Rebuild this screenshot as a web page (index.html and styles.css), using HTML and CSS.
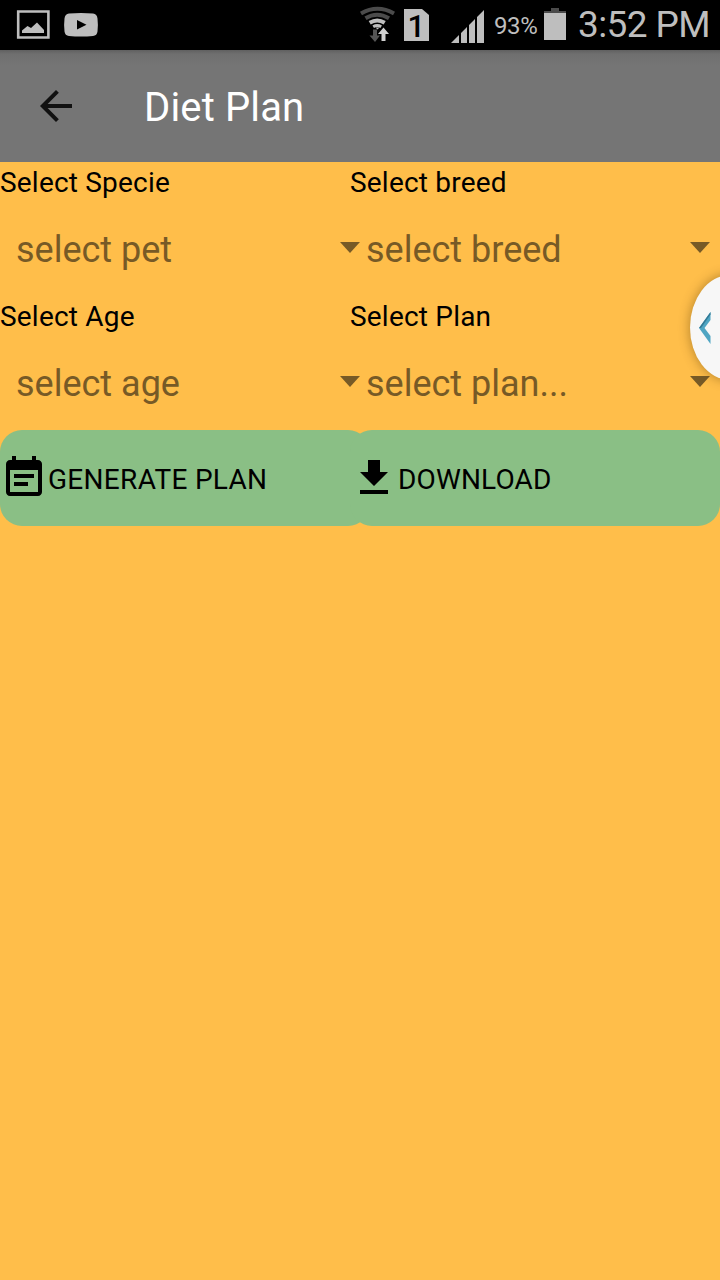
FILE: index.html
```html
<!DOCTYPE html>
<html lang="en">
<head>
<meta charset="utf-8">
<title>Diet Plan</title>
<link rel="stylesheet" href="styles.css">
</head>
<body>
<div class="screen">
  <header class="status">
    <svg class="notices" width="120" height="50" viewBox="0 0 120 50">
      <path fill="none" stroke="#bebebe" stroke-width="2.6" d="M18.200 11.500h30.200v26H18.200z"/>
      <path fill="#bebebe" d="M22 33v-2.500l5.500-4.500 3.500 2 6-5.500 7 7.500v3z"/>
      <path fill="#bebebe" fill-rule="evenodd" d="M69 13.500q12-1 24 0q4 .5 4.500 5q.8 6.500 0 13q-.5 4-4.500 4.500q-12 1-24 0q-4-.5-4.500-4.500q-.8-6.500 0-13q.5-4.500 4.500-5zM77 20v9.500l9.500-4.750z"/>
    </svg>
    <div class="indicators">
      <svg width="140" height="50" viewBox="354 0 140 50">
        <g fill="none" stroke-width="4">
          <path stroke="#4b4b4b" d="M361 13.500q16.500-9.500 33 0M365.500 18.200q11.500-7 23.500 0"/>
          <path stroke="#bebebe" d="M369.700 22.800q7.500-4.500 15 0"/>
          <path stroke="#bebebe" stroke-width="3" d="M373.200 26.800q4-2.400 8 0"/>
        </g>
        <path fill="#bebebe" d="M375.500 27.500h4l-2 2z"/>
        <path fill="#555" d="M373 29.500h4v6h3l-5 6.500-5.500-6.500h3.500z"/>
        <path fill="#d0d0d0" d="M383.500 27.500l5.500 6.500h-3.500v7h-4v-7H378z"/>
        <path fill="#bebebe" d="M404 9h18l7 6v26h-25z"/>
        <text class="sim" x="407.500" y="37">1</text>
        <path fill="#bebebe" d="M451 43l8-8v8zM461 43V33l6-6v16zM469 43V25l6-6v24zM477 43V17l7-7v33z"/>
      </svg>
      <span class="percent">93%</span>
      <svg width="22" height="50" viewBox="0 0 22 50">
        <path fill="#4b4b4b" d="M7 8h8v3h7v2H0v-2h7z"/>
        <path fill="#bebebe" d="M0 13h22v27H0z"/>
      </svg>
      <time class="clock">3:52 PM</time>
    </div>
  </header>

  <div class="toolbar">
    <svg class="back" width="48" height="48" viewBox="0 0 24 24"><path d="M20 11H7.830l5.590-5.590L12 4l-8 8 8 8 1.410-1.410L7.830 13H20v-2z"/></svg>
    <h1 class="title">Diet Plan</h1>
  </div>

  <main class="form">
    <div class="field">
      <span class="label">Select Specie</span>
      <div class="select"><span class="value">select pet</span><svg class="caret" width="20" height="11" viewBox="0 0 20 11"><path d="M0 0h20L10 11z"/></svg></div>
    </div>
    <div class="field">
      <span class="label">Select breed</span>
      <div class="select"><span class="value">select breed</span><svg class="caret" width="20" height="11" viewBox="0 0 20 11"><path d="M0 0h20L10 11z"/></svg></div>
    </div>
    <div class="field">
      <span class="label">Select Age</span>
      <div class="select"><span class="value">select age</span><svg class="caret" width="20" height="11" viewBox="0 0 20 11"><path d="M0 0h20L10 11z"/></svg></div>
    </div>
    <div class="field">
      <span class="label">Select Plan</span>
      <div class="select"><span class="value">select plan...</span><svg class="caret" width="20" height="11" viewBox="0 0 20 11"><path d="M0 0h20L10 11z"/></svg></div>
    </div>
    <button class="action generate">
      <svg width="48" height="48" viewBox="0 0 24 24"><path d="M17 10H7v2h10v-2zm2-7h-1V1h-2v2H8V1H6v2H5c-1.110 0-1.990.9-1.990 2L3 19c0 1.100.89 2 2 2h14c1.100 0 2-.9 2-2V5c0-1.100-.9-2-2-2zm0 16H5V8h14v11zm-5-5H7v2h7v-2z"/></svg>
      <span class="caption">GENERATE PLAN</span>
    </button>
    <button class="action">
      <svg width="48" height="48" viewBox="0 0 24 24"><path d="M19 9h-4V3H9v6H5l7 7 7-7zM5 18v2h14v-2H5z"/></svg>
      <span class="caption">DOWNLOAD</span>
    </button>
  </main>

  <div class="drawer-handle">
    <svg width="12" height="32" viewBox="0 0 12 32"><path fill="#4fa5c3" d="M11.500 0v8L5.500 16l6 8v8L0 16z"/><path fill="#327995" d="M11.500 0v2.500L2 16H0z"/></svg>
  </div>
</div>
</body>
</html>
```
FILE: styles.css
```css
* { box-sizing: border-box; }

body {
  margin: 0;
  font-family: Roboto, "Noto Sans", sans-serif;
}

.screen {
  position: relative;
  width: 720px;
  height: 1280px;
  overflow: hidden;
  background: #ffbe4a;
}

.status {
  display: flex;
  justify-content: space-between;
  height: 50px;
  background: #000;
  color: #bebebe;
}

.indicators { display: flex; align-items: center; }

.sim {
  fill: #000;
  font-size: 31px;
  font-weight: 500;
}

.percent {
  width: 50px;
  padding-top: 2px;
  font-size: 24px;
  letter-spacing: -.4px;
  white-space: nowrap;
}

.clock {
  width: 154px;
  padding-left: 12px;
  font-size: 37px;
  letter-spacing: -.6px;
  line-height: 50px;
  white-space: nowrap;
}

.toolbar {
  display: flex;
  align-items: center;
  height: 112px;
  padding-left: 32px;
  background: linear-gradient(#606060, #6f6f6f 4px, #757575 16px);
}

.back { fill: #111; }

.title {
  margin: 4px 0 0 64px;
  color: #fff;
  font-size: 40px;
  font-weight: 400;
  letter-spacing: .15px;
  line-height: 48px;
}

.form {
  display: grid;
  grid-template-columns: 350px 350px;
  grid-template-rows: 134px 134px 96px;
}

.label {
  display: block;
  height: 38px;
  font-size: 28px;
  letter-spacing: .2px;
  line-height: 41px;
  white-space: nowrap;
}

.select {
  display: flex;
  align-items: center;
  justify-content: space-between;
  width: 360px;
  height: 96px;
  padding-left: 16px;
  color: #775a26;
}

.value {
  padding-top: 4px;
  font-size: 36px;
  line-height: 48px;
}

.caret { margin-top: -1px; fill: currentColor; }

.action {
  display: flex;
  align-items: center;
  width: 370px;
  height: 96px;
  padding: 0;
  border: 0;
  border-radius: 22px;
  background: #8abf85;
  color: #000;
  font: 400 28px/40px Roboto, "Noto Sans", sans-serif;
  letter-spacing: .15px;
  text-align: left;
}

.generate { letter-spacing: .3px; }

.caption { padding-top: 4px; }

.drawer-handle {
  position: absolute;
  top: 275px;
  right: -50px;
  display: flex;
  align-items: center;
  width: 80px;
  height: 105px;
  padding-left: 9px;
  border-radius: 50%;
  background: #f7f7f7;
  box-shadow: 0 0 12px rgba(80, 50, 0, .45);
}
```
